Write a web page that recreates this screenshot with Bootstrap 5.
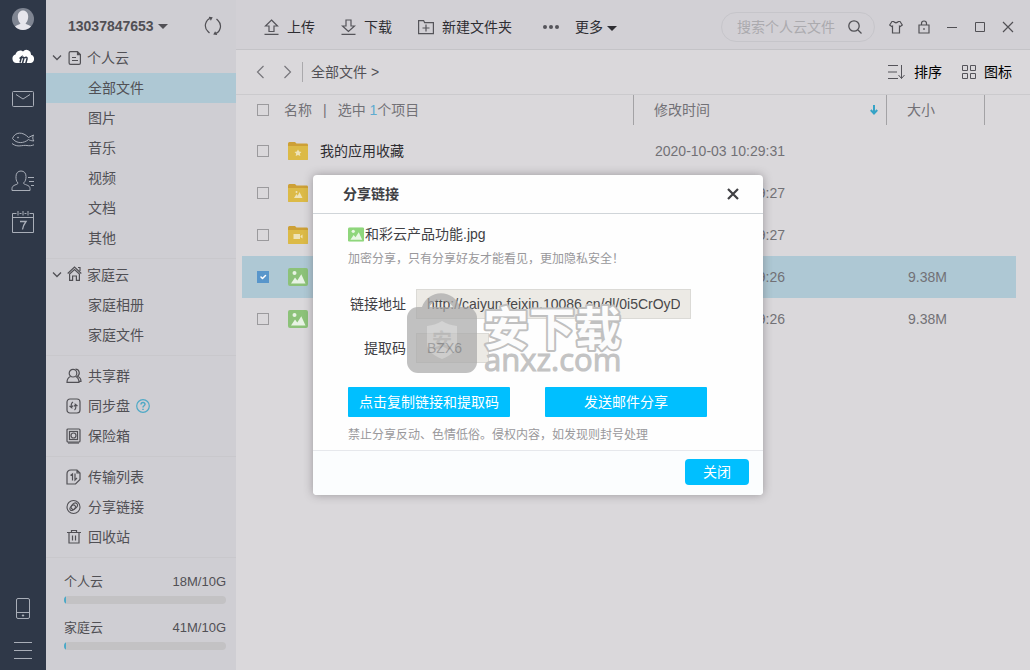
<!DOCTYPE html>
<html lang="zh-CN">
<head>
<meta charset="utf-8">
<meta name="viewport" content="width=device-width, initial-scale=1">
<title>和彩云</title>
<link href="https://cdn.jsdelivr.net/npm/bootstrap@5.3.0/dist/css/bootstrap.min.css" rel="stylesheet">
<style>
  body { font-family: "Liberation Sans", "Noto Sans CJK SC", sans-serif; font-size: 14px; line-height: 20px; color: #515055; background: #dad8db; }
  a { color: inherit; text-decoration: none; }
  svg { display: block; flex: none; fill: none; stroke: currentColor; }
  .plain { border: 0; padding: 0; background: none; color: inherit; line-height: 20px; }

  .rail { width: 46px; background: #2f3848; color: #a9aeb8; padding: 8px 0 0; }
  .rail a { display: flex; height: 41px; align-items: center; justify-content: center; }
  .rail a:first-child { height: 22px; margin-bottom: 7px; }

  .side { width: 190px; background: #cfced3; }
  .account { height: 43px; padding: 12px 14px 0 22px; font-weight: 700; }
  .group { border-bottom: 1px solid #c9c8cc; padding: 0 0 5px; }
  .group.roomy { padding-top: 5px; }
  .item { display: flex; align-items: center; height: 30px; padding-left: 42px; }
  .item.iconic { padding-left: 20px; gap: 6px; }
  .item.head { padding-left: 6px; gap: 5px; }
  .item.family { height: 31px; }
  .item.on { background: #aec8d4; }
  .item .help { color: #4fa9c6; }
  .quota { padding: 14px 10px 0 18px; font-size: 13px; }
  .quota .progress { height: 8px; margin: 4px 0 14px; background: #c3c2c4; border-radius: 4px; }
  .quota .progress-bar { background: #4aa9c8; }

  .caret { width: 0; height: 0; border: 5px solid transparent; border-top-color: currentColor; border-bottom: 0; }
  .topbar { height: 50px; background: #d2d0d5; border-bottom: 1px solid #c4c3c7; padding: 4px 15px 0 28px; }
  .topbar .tools { gap: 26px; color: #2e2d32; }
  .tools svg { color: #55545a; }
  .search { width: 154px; height: 30px; border: 1px solid #c6c5ca; border-radius: 15px; padding: 0 12px 0 15px; }
  .search input { width: 100px; min-width: 0; border: 0; padding: 0; background: none; outline: 0; }
  .search input::placeholder { color: #abaaae; opacity: 1; }
  .winctl { gap: 14px; margin-left: 14px; }
  .crumbs { height: 45px; border-bottom: 1px solid #cbcacd; padding: 0 18px 0 20px; }
  .crumbs .rule { width: 1px; height: 20px; background: #aaa9ac; margin: 0 8px 0 10px; }
  .arrows { gap: 18px; color: #77767b; }

  .filewrap { padding: 0 14px 0 6px; }
  .files { width: 100%; table-layout: fixed; color: #727176; }
  .files th { height: 35px; font-weight: 400; padding: 0 0 5px; }
  .files td { height: 42px; padding: 0; }
  .files .c-check { width: 42px; padding-left: 15px; }
  .files .c-time { width: 253px; padding-left: 21px; }
  .files .c-size { width: 98px; padding-left: 21px; }
  .files td.c-time, .files td.c-size { padding-left: 22px; }
  .files .c-rest { width: 32px; }
  .files .bar { margin: 0 11px; }
  .files .count { color: #5fabd0; }
  .files .sorted { color: #35a3c6; }
  .files th:nth-child(n+3) { background: linear-gradient(#a3a2a5, #a3a2a5) left top / 1px 30px no-repeat; }
  .files tr.on { background: #aec8d4; }
  .files .nm { display: flex; align-items: center; gap: 12px; padding-left: 4px; color: #2e2d32; }
  .files input.form-check-input { display: block; width: 12px; height: 12px; margin: 0; border-radius: 0; border: 1px solid #9b9a9d; background-color: transparent; }
  .files input.form-check-input:checked { background-color: #5896cb; border-color: #5896cb; }
  .pic { color: #8cc279; }

  .veil { position: absolute; inset: 0; }
  .dlg { position: relative; width: 450px; background: #fefefe; border-radius: 4px; box-shadow: 0 0 10px rgba(60,55,60,.4); color: #404044; }
  .dlg header { height: 39px; border-bottom: 1px solid #d0d5d9; padding: 0 24px 0 30px; }
  .dlg h1 { font-size: 14px; line-height: 20px; margin: 0; font-weight: 700; }
  .dlg .inner { padding: 8px 35px 3px; line-height: 24px; }
  .dlg .pic { color: #8fd67c; }
  .hint { font-size: 12px; color: #99989b; padding-top: 1px; margin-bottom: 18px; }
  .hint.warn { padding-top: 6px; margin-bottom: 0; }
  .field { display: flex; align-items: center; margin-bottom: 14px; }
  .field label { width: 58px; margin-right: 10px; text-align: right; }
  .field input { height: 30px; border: 1px solid #dbdad6; border-radius: 0; background: #eceae5; padding: 0 10px; color: #48484a; font-size: 14px; }
  .field .long { width: 275px; }
  .field .short { width: 73px; }
  .actions { gap: 35px; }
  .dlg .btn { --bs-btn-bg: #00bfff; --bs-btn-color: #fff; --bs-btn-border-width: 0px; --bs-btn-font-size: 14px; --bs-btn-padding-x: 0px; --bs-btn-padding-y: 0px; --bs-btn-border-radius: 1px; width: 162px; height: 30px; line-height: 30px; }
  .dlg footer { border-top: 1px solid #e6e8ec; background: #fbfdfe; padding: 8px 14px 10px; border-radius: 0 0 4px 4px; }
  .dlg footer .btn { --bs-btn-border-radius: 4px; width: 64px; height: 26px; line-height: 26px; }
  .stamp { position: absolute; left: 92px; top: 114px; pointer-events: none; stroke: none; overflow: visible; }
</style>
</head>
<body>
<svg width="0" height="0" class="position-absolute" aria-hidden="true">
  <symbol id="folder" viewBox="0 0 20 18"><path d="M0 1.500Q0 0 1.500 0H7l1.500 1.600H18.500Q20 1.600 20 3V16.500Q20 18 18.500 18h-17Q0 18 0 16.500z" fill="#cda036" stroke="none"/><path d="M0 4h20v12.500q0 1.500-1.500 1.500h-17Q0 18 0 16.500z" fill="#dcba47" stroke="none"/></symbol>
  <symbol id="photo" viewBox="0 0 20 18"><rect width="20" height="18" rx="2" fill="currentColor" stroke="none"/><circle cx="6.500" cy="5" r="2" fill="#fff" fill-opacity=".8" stroke="none"/><path d="M3 15.500 7 9.500l2.300 3 4-6.300 4.200 9.300z" fill="#fff" fill-opacity=".8" stroke="none"/></symbol>
</svg>
<div class="d-flex min-vh-100">
  <nav class="rail d-flex flex-column flex-shrink-0" aria-label="应用">
    <a href="#" aria-label="头像"><svg width="22" height="22" viewBox="0 0 22 22"><g stroke="none"><circle cx="11" cy="11" r="11" fill="#7f8592"/><path d="M3 18.500c2-2 4.500-1.500 5.500-3C6.500 13.500 5.800 11 5.800 8.500 5.800 5 8 2.500 11 2.500s5.200 2.500 5.200 6c0 2.500-.7 5-2.700 7 1 1.500 3.500 1 5.500 3A11 11 0 0 1 3 18.500z" fill="#e6e5ec"/></g></svg></a>
    <a href="#" aria-label="云盘"><svg width="22" height="18" viewBox="0 0 22 18"><path d="M4.500 14A4.300 4.300 0 0 1 3.500 5.600 4.800 4.800 0 0 1 11 2.400a4.600 4.600 0 0 1 8 3.400A4.200 4.200 0 0 1 18.500 14z" fill="#fff" stroke="none"/><path d="M7.500 9.500 9.500 8 8 13.500M9.500 9c2-1.500 2.700-.5 2.200 1L10 16M12.500 9c1.800-1.500 3-.5 2.500 1l-1.500 5.500" stroke="#2f3848" stroke-width="1.500"/></svg></a>
    <a href="#" aria-label="邮件"><svg width="22" height="16" viewBox="0 0 22 16"><rect x=".5" y=".5" width="21" height="15" rx="1"/><path d="m4 3.500 7 4.500 7-4.500"/></svg></a>
    <a href="#" aria-label="飞信"><svg width="24" height="18" viewBox="0 0 24 18"><path d="M1.500 7.500C4 .5 12 .5 17.500 6.500L22.500 4c-1 2.500-1 3.500.3 6-3-.3-4.300-.8-5.300-1.500C13 12.500 5.500 13 1.500 7.500zM1 12.500c6 4.500 10 1.200 15 2 2.500.5 4.500.2 7-.7"/><circle cx="7" cy="6.500" r=".5"/></svg></a>
    <a href="#" aria-label="联系人"><svg width="24" height="22" viewBox="0 0 24 22"><path d="M7 13C5 11 5 9 5 6.500 5 3 7 1 10 1s5 2 5 5.500C15 9 14.500 11.500 12.500 13c0 2 6.500 1.500 6.500 5.500V20.500H1v-2C1 14.500 7 15 7 13zM17 7.500h6M18 11.500h5M20 15.500h3"/></svg></a>
    <a href="#" aria-label="日历"><svg width="22" height="24" viewBox="0 0 22 24"><path d="M4.500 3.500h-4v19h21v-19h-4M7.500 3.500h2M12.500 3.500h2M.5 7.500h21M6 1v4.500M11 1v4.500M16 1v4.500"/><path d="M8 11.500h6q-3 4-3.500 8" stroke-width="1.300"/></svg></a>
    <a href="#" class="mt-auto" aria-label="手机"><svg width="14" height="21" viewBox="0 0 14 21"><rect x=".5" y=".5" width="13" height="20" rx="1.500"/><path d="M.5 14.500h13"/><circle cx="7" cy="17.500" r=".7" fill="#fff"/></svg></a>
    <a href="#" aria-label="菜单"><svg width="18" height="18" viewBox="0 0 18 18"><path d="M0 1.500h18M0 9.500h18M0 17.500h18"/></svg></a>
  </nav>

  <div class="position-relative d-flex flex-grow-1">
    <aside class="side flex-shrink-0">
      <div class="account d-flex justify-content-between">
        <button type="button" class="plain d-flex align-items-center align-self-start gap-1 fw-bold pt-1">13037847653 <span class="caret"></span></button>
        <button type="button" class="plain align-self-start pt-1" aria-label="刷新"><svg width="18" height="20" viewBox="0 0 18 20"><path d="M7.500 1.800A8 8 0 0 0 4 15.500L5.500 17M10.500 18A8 8 0 0 0 14 4.500L12.500 3M5 1.300 7.800 1.800 6.500 4.200M13 18.500 10.200 18 11.500 15.800" stroke-width="1.200"/></svg></button>
      </div>
      <div class="group">
        <a href="#" class="item head"><svg width="10" height="6" viewBox="0 0 10 6" stroke-width="1.300"><path d="m1 .5 4 4 4-4"/></svg><svg class="ms-px" width="15" height="14" viewBox="0 0 15 14" stroke-width="1.200"><path d="M3.500 .6H10.500L13.400 3.500V12q0 1.400-1.400 1.400H3.500Q2.100 13.400 2.100 12V2Q2.100 .6 3.500 .6zM10.500 .6v3h3M5 6.500h4M5 9.500h6"/></svg>个人云</a>
        <a href="#" class="item on">全部文件</a>
        <a href="#" class="item">图片</a>
        <a href="#" class="item">音乐</a>
        <a href="#" class="item">视频</a>
        <a href="#" class="item">文档</a>
        <a href="#" class="item">其他</a>
      </div>
      <div class="group">
        <a href="#" class="item head family"><svg width="10" height="6" viewBox="0 0 10 6" stroke-width="1.300"><path d="m1 .5 4 4 4-4"/></svg><svg width="15" height="18" viewBox="0 0 15 18" stroke-width="1.200"><path d="M.7 7.500 7.500 1l6.800 6.500M11 1.500h2v3.500M2.600 8v6.400h3V10h3.800v4.400h3V8L7.500 3.600z"/></svg>家庭云</a>
        <a href="#" class="item">家庭相册</a>
        <a href="#" class="item">家庭文件</a>
      </div>
      <div class="group roomy">
        <a href="#" class="item iconic"><svg width="16" height="16" viewBox="0 0 16 16" stroke-width="1.200"><circle cx="7" cy="5.200" r="3.800"/><path d="M4.500 8.500C2 9.500 1 11.500 1 14.400h12c0-3-1-5-3.500-5.900M9.500 1.200a3.800 3.800 0 0 1 2 7c2 .8 3.500 2.500 3.500 5.200h-2"/></svg>共享群</a>
        <a href="#" class="item iconic"><svg width="16" height="16" viewBox="0 0 16 16" stroke-width="1.200"><rect x="1" y="1" width="13" height="14" rx="3"/><path d="M7 4Q4.500 5.500 5.500 9.500L3.500 8M5.500 9.500 7 7.500M8.500 12Q10.500 10.500 9.500 6.500l2 1.500M9.500 6.500 8 8.500"/></svg>同步盘<svg class="help" width="14" height="14" viewBox="0 0 14 14" stroke-width="1.200"><circle cx="7" cy="7" r="6.300"/><path d="M5 5.500c0-3 4.200-2.500 4 0C8.800 6.800 7 6.800 7 8.500M7 9.700v1.400" stroke-width="1.500"/></svg></a>
        <a href="#" class="item iconic"><svg width="16" height="16" viewBox="0 0 16 16" stroke-width="1.200"><rect x="1" y="1" width="13" height="13" rx="1"/><rect x="3.500" y="3.500" width="8" height="8"/><circle cx="7.500" cy="7.500" r="2.500"/><path d="M2 15h11"/></svg>保险箱</a>
      </div>
      <div class="group roomy">
        <a href="#" class="item iconic"><svg width="16" height="16" viewBox="0 0 16 16" stroke-width="1.200"><path d="M5 1h6l3 3v6.500L9.500 15H1V5q0-4 4-4zM11 1v3h3M4.500 6.500l2-1.500v6.500M9 4.500v6.500l2-2"/></svg>传输列表</a>
        <a href="#" class="item iconic"><svg width="16" height="16" viewBox="0 0 16 16" stroke-width="1.100"><circle cx="7.500" cy="8" r="6.500"/><ellipse cx="8.300" cy="7.200" rx="3.600" ry="2.500" transform="rotate(-45 8.300 7.200)"/><ellipse cx="6.700" cy="8.800" rx="3.200" ry="2.100" transform="rotate(-45 6.700 8.800)"/></svg>分享链接</a>
        <a href="#" class="item iconic"><svg width="16" height="16" viewBox="0 0 16 16" stroke-width="1.200"><path d="M1 3.500h14M5.500 3V1.500h5V3M3 4v10h10V4M6.500 6.500v5M9.500 6.500v5"/></svg>回收站</a>
      </div>
      <div class="quota">
        <div class="d-flex justify-content-between"><span>个人云</span><span>18M/10G</span></div>
        <div class="progress" role="progressbar" aria-label="个人云" aria-valuenow="1" aria-valuemin="0" aria-valuemax="100"><div class="progress-bar" style="width:1%"></div></div>
        <div class="d-flex justify-content-between"><span>家庭云</span><span>41M/10G</span></div>
        <div class="progress" role="progressbar" aria-label="家庭云" aria-valuenow="1" aria-valuemin="0" aria-valuemax="100"><div class="progress-bar" style="width:1%"></div></div>
      </div>
    </aside>

    <main class="flex-grow-1">
      <div class="topbar d-flex align-items-center">
        <div class="tools d-flex align-items-center">
          <button type="button" class="plain d-flex align-items-center gap-2"><svg width="15" height="16" viewBox="0 0 15 16" stroke-width="1.200"><path d="M7.500 1 13.500 7H10v5.500H5V7H1.500zM.5 15.300h14"/></svg>上传</button>
          <button type="button" class="plain d-flex align-items-center gap-2"><svg width="15" height="16" viewBox="0 0 15 16" stroke-width="1.200"><path d="M7.500 12.500 1.500 7H5V1h5v6h3.500zM.5 15.300h14"/></svg>下载</button>
          <button type="button" class="plain d-flex align-items-center gap-2"><svg width="16" height="16" viewBox="0 0 16 16" stroke-width="1.200"><path d="M.6 1.600h5l1 2h8.800v11H.6zM8 5.500v7M4.500 9h7"/></svg>新建文件夹</button>
          <button type="button" class="plain d-flex align-items-center ms-1"><svg class="me-3" width="17" height="6" viewBox="0 0 17 6"><g fill="currentColor" stroke="none"><circle cx="3" cy="3" r="2"/><circle cx="9" cy="3" r="2"/><circle cx="15" cy="3" r="2"/></g></svg>更多<span class="caret ms-1 mt-1"></span></button>
        </div>
        <div class="search d-flex align-items-center justify-content-between ms-auto">
          <input type="text" placeholder="搜索个人云文件" aria-label="搜索个人云文件">
          <svg width="14" height="14" viewBox="0 0 14 14" stroke-width="1.300"><circle cx="6" cy="6" r="5.200"/><path d="m10 10 3.500 3.500"/></svg>
        </div>
        <div class="winctl d-flex align-items-center">
          <button type="button" class="plain" aria-label="皮肤"><svg width="14" height="14" viewBox="0 0 14 14" stroke-width="1.200"><path d="M4.500 1.500Q7 4 9.500 1.500L11 1.500 13.300 5 11 6.800 10.500 6.300V13H3.500V6.300L3 6.800 .7 5 3 1.500z"/></svg></button>
          <button type="button" class="plain" aria-label="锁定"><svg width="14" height="14" viewBox="0 0 14 14" stroke-width="1.200"><path d="M2 5h10v8H2zM4.500 5V3.500a2.500 2.500 0 0 1 5 0V5M7 8v2"/></svg></button>
          <button type="button" class="plain" aria-label="最小化"><svg width="14" height="14" viewBox="0 0 14 14"><path d="M2 7.500h10"/></svg></button>
          <button type="button" class="plain" aria-label="最大化"><svg width="14" height="14" viewBox="0 0 14 14"><path d="M2.500 2.500h9v9h-9z"/></svg></button>
          <button type="button" class="plain" aria-label="关闭窗口"><svg width="14" height="14" viewBox="0 0 14 14" stroke-width="1.200"><path d="m2 2 10 10M12 2 2 12"/></svg></button>
        </div>
      </div>
      <div class="crumbs d-flex align-items-center">
        <div class="arrows d-flex">
          <button type="button" class="plain" aria-label="后退"><svg width="9" height="14" viewBox="0 0 9 14" stroke-width="1.200"><path d="M7.500 1 1.500 7l6 6"/></svg></button>
          <button type="button" class="plain" aria-label="前进"><svg width="9" height="14" viewBox="0 0 9 14" stroke-width="1.200"><path d="m1.500 1 6 6-6 6"/></svg></button>
        </div>
        <span class="rule"></span>
        <a href="#">全部文件</a><span class="ms-1">&gt;</span>
        <div class="tools d-flex align-items-center ms-auto text-black">
          <button type="button" class="plain d-flex align-items-center gap-2 me-1"><svg width="18" height="14" viewBox="0 0 18 14"><path d="M0 .5h10M0 7h9M0 13.500h10M13.500 0v13.500M10.500 10l3 3.500 3-3.500"/></svg>排序</button>
        </div>
        <div class="tools ms-3 text-black">
          <button type="button" class="plain d-flex align-items-center gap-2"><svg width="14" height="14" viewBox="0 0 14 14"><path d="M.5 .5h5v5h-5zM8.500 .5h5v5h-5zM.5 8.500h5v5h-5zM8.500 8.500h5v5h-5z"/></svg>图标</button>
        </div>
      </div>
      <div class="filewrap">
        <table class="files">
          <thead><tr>
            <th class="c-check"><input class="form-check-input" type="checkbox" aria-label="全选"></th>
            <th>名称<span class="bar">|</span>选中 <span class="count">1</span>个项目</th>
            <th class="c-time"><div class="d-flex align-items-center justify-content-between pe-2">修改时间<svg class="sorted" width="8" height="10" viewBox="0 0 8 10"><path d="M4 0v8M.8 5 4 8.500 7.200 5" stroke-width="2"/></svg></div></th>
            <th class="c-size">大小</th>
            <th class="c-rest"></th>
          </tr></thead>
          <tbody>
            <tr><td class="c-check"><input class="form-check-input" type="checkbox" aria-label="选择文件夹"></td>
              <td><div class="nm"><svg width="20" height="18"><use href="#folder"/><path d="m10 7.500 1.200 2 2.300.4-1.600 1.700.4 2.400-2.300-1-2.300 1 .4-2.400-1.600-1.700 2.300-.4z" fill="#eee3b8" stroke="none"/></svg>我的应用收藏</div></td>
              <td class="c-time">2020-10-03 10:29:31</td><td></td><td></td></tr>
            <tr><td class="c-check"><input class="form-check-input" type="checkbox" aria-label="选择文件夹"></td>
              <td><div class="nm"><svg width="20" height="18"><use href="#folder"/><path d="m6 14 2.500-4 1.200 1.800L11.500 8l3 6z" fill="#eee3b8" stroke="none"/><circle cx="8.500" cy="8" r="1" fill="#eee3b8" stroke="none"/></svg></div></td>
              <td class="c-time">2020-10-03 10:29:27</td><td></td><td></td></tr>
            <tr><td class="c-check"><input class="form-check-input" type="checkbox" aria-label="选择文件夹"></td>
              <td><div class="nm"><svg width="20" height="18"><use href="#folder"/><path d="M5.500 8h6.500v5h-6.500zM12.500 10l2-1.500v4L12.500 11z" fill="#eee3b8" stroke="none"/></svg></div></td>
              <td class="c-time">2020-10-03 10:29:27</td><td></td><td></td></tr>
            <tr class="on"><td class="c-check"><input class="form-check-input" type="checkbox" checked aria-label="选择文件"></td>
              <td><div class="nm"><svg class="pic" width="20" height="18"><use href="#photo"/></svg></div></td>
              <td class="c-time">2020-10-03 10:29:26</td><td class="c-size">9.38M</td><td></td></tr>
            <tr><td class="c-check"><input class="form-check-input" type="checkbox" aria-label="选择文件"></td>
              <td><div class="nm"><svg class="pic" width="20" height="18"><use href="#photo"/></svg></div></td>
              <td class="c-time">2020-10-03 10:29:26</td><td class="c-size">9.38M</td><td></td></tr>
          </tbody>
        </table>
      </div>
    </main>

    <div class="veil d-flex align-items-center justify-content-center">
      <section class="dlg" role="dialog" aria-labelledby="dlg-title">
        <header class="d-flex align-items-center justify-content-between">
          <h1 id="dlg-title">分享链接</h1>
          <button type="button" class="plain" aria-label="关闭"><svg width="12" height="12" viewBox="0 0 12 12" stroke-width="2.200"><path d="m1 1 10 10M11 1 1 11"/></svg></button>
        </header>
        <div class="inner">
          <div class="d-flex align-items-center"><svg class="pic" width="17" height="15" viewBox="0 0 21 18"><use href="#photo" width="20" height="18"/></svg>和彩云产品功能.jpg</div>
          <div class="hint">加密分享，只有分享好友才能看见，更加隐私安全！</div>
          <div class="field"><label for="url">链接地址</label><input id="url" class="long" type="text" readonly value="http://caiyun.feixin.10086.cn/dl/0i5CrOyD"></div>
          <div class="field mb-4"><label for="code">提取码</label><input id="code" class="short" type="text" readonly value="BZX6"></div>
          <div class="actions d-flex">
            <button type="button" class="btn">点击复制链接和提取码</button>
            <button type="button" class="btn">发送邮件分享</button>
          </div>
          <div class="hint warn">禁止分享反动、色情低俗。侵权内容，如发现则封号处理</div>
        </div>
        <footer class="d-flex justify-content-end"><button type="button" class="btn">关闭</button></footer>
        <svg class="stamp" width="224" height="96" viewBox="0 0 224 96">
          <g opacity=".72">
            <path d="M17 18a20 20 0 0 1 38 0h-7a14 14 0 0 0-24 0z" fill="#aaa"/>
            <rect x="2" y="18" width="70" height="66" rx="11" fill="#aaa"/>
            <path d="M22 37q9-1 15-5 6 4 15 5v18q0 9-15 15-15-6-15-15z" fill="#c3c3c3"/>
            <text x="27" y="59" font-size="20" font-weight="700" fill="#aaa" font-family="Noto Sans CJK SC, sans-serif">安</text>
          </g>
          <text x="78" y="56" font-size="46" font-weight="700" fill="#fcfcfc" stroke="#c0c0c0" stroke-width="4" stroke-linejoin="round" paint-order="stroke" font-family="Noto Sans CJK SC, sans-serif">安下载</text>
          <text x="79" y="82" font-size="31" fill="#c3c3c3" stroke="#c3c3c3" stroke-width="1" font-family="Open Sans, sans-serif">anxz.com</text>
        </svg>
      </section>
    </div>
  </div>
</div>
<script src="https://cdn.jsdelivr.net/npm/bootstrap@5.3.0/dist/js/bootstrap.bundle.min.js"></script>
</body>
</html>
